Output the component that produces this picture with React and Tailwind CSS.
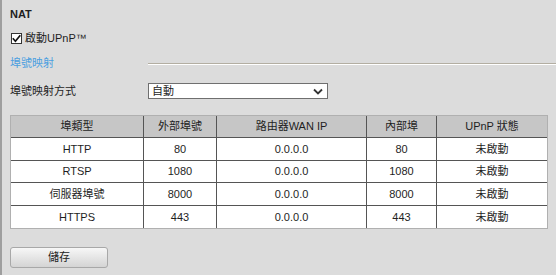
import React from 'react';

const rows = [
  ['HTTP', '80', '0.0.0.0', '80', '未啟動'],
  ['RTSP', '1080', '0.0.0.0', '1080', '未啟動'],
  ['伺服器埠號', '8000', '0.0.0.0', '8000', '未啟動'],
  ['HTTPS', '443', '0.0.0.0', '443', '未啟動'],
];

const widths = ['w-[133px]', 'w-[73px]', 'w-[150px]', 'w-[70px]', 'w-[110px]'];
const rowHeights = ['h-[23px]', 'h-[22px]', 'h-[23px]', 'h-[22px]'];

export default function App() {
  return (
    <div
      className="w-[556px] h-[275px] bg-[#dcdcdc] border-l-2 border-[#9e9e9e] pl-[8px] text-[11px] text-[#1e1e1e] overflow-hidden"
      style={{ fontFamily: '"Liberation Sans", "Noto Sans CJK TC", sans-serif' }}
    >
      {/* 標題 */}
      <div className="pt-[7px] h-[31px] font-bold text-[11px] leading-[14px]">NAT</div>

      {/* 啟動UPnP */}
      <div className="flex items-center h-[14px] gap-[3px]">
        <span className="ml-[1px] w-[11px] h-[11px] bg-white border border-[#333] flex items-center justify-center">
          <svg width="9" height="9" viewBox="0 0 9 9">
            <path d="M0.8 4.3 L3.4 7.2 L8.3 1.2" fill="none" stroke="#111" strokeWidth="1.7" />
          </svg>
        </span>
        <span className="leading-[14px]">啟動UPnP™</span>
      </div>

      {/* 埠號映射 + 分隔線 */}
      <div className="flex items-center h-[14px] mt-[11px]">
        <span className="w-[138px] text-[#4b9fe0] leading-[14px]">埠號映射</span>
        <div className="flex-1 flex flex-col mt-[2px]">
          <div className="h-px bg-[#b3aea2]" />
          <div className="h-px bg-white" />
        </div>
      </div>

      {/* 埠號映射方式 */}
      <div className="flex items-center h-[16px] mt-[13px]">
        <span className="w-[138px] leading-[14px]">埠號映射方式</span>
        <div className="w-[180px] h-[16px] bg-white border border-[#6f6f6f] flex items-center justify-between pl-[3px] pr-[4px]">
          <span className="leading-[14px]">自動</span>
          <svg width="10" height="7" viewBox="0 0 10 7">
            <path d="M1 1.5 L5 5.5 L9 1.5" fill="none" stroke="#333" strokeWidth="1.8" />
          </svg>
        </div>
      </div>

      {/* 表格 */}
      <div className="mt-[16px] w-[538px] border border-[#b0b0b0]">
        <div className="flex h-[22px] bg-[#c6c6c6] border-b border-[#555]">
          {['埠類型', '外部埠號', '路由器WAN IP', '內部埠', 'UPnP 狀態'].map((h, i) => (
            <div
              key={h}
              className={`${widths[i]} flex items-center justify-center ${i < 4 ? 'border-r border-[#555]' : ''}`}
            >
              {h}
            </div>
          ))}
        </div>
        {rows.map((r, ri) => (
          <div
            key={ri}
            className={`flex ${rowHeights[ri]} bg-white ${ri < rows.length - 1 ? 'border-b border-[#555]' : ''}`}
          >
            {r.map((c, i) => (
              <div
                key={i}
                className={`${widths[i]} flex items-center justify-center ${i < 4 ? 'border-r border-[#555]' : ''}`}
              >
                {c}
              </div>
            ))}
          </div>
        ))}
      </div>

      {/* 儲存 */}
      <button className="block mt-[18px] w-[98px] h-[21px] rounded-[3px] border border-[#a8a8a8] bg-gradient-to-b from-[#f7f7f7] to-[#d4d4d4] text-[11px] text-[#222]">
        儲存
      </button>
    </div>
  );
}
